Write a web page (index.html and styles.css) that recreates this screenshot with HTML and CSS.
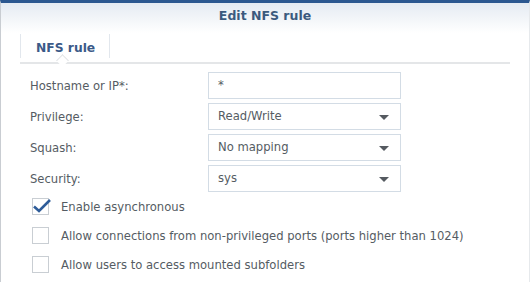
FILE: index.html
```html
<!DOCTYPE html>
<html lang="en">
<head>
  <meta charset="UTF-8">
  <title>Edit NFS rule</title>
  <link rel="stylesheet" href="styles.css">
</head>
<body>
  <div class="window">
    <div class="header">Edit NFS rule</div>

    <div class="tabs">
      <div class="tab active">NFS rule</div>
    </div>

    <div class="panel">
      <div class="row">
        <label class="label">Hostname or IP*:</label>
        <div class="field">*</div>
      </div>
      <div class="row">
        <label class="label">Privilege:</label>
        <div class="field select">Read/Write<span class="arrow"></span></div>
      </div>
      <div class="row">
        <label class="label">Squash:</label>
        <div class="field select">No mapping<span class="arrow"></span></div>
      </div>
      <div class="row">
        <label class="label">Security:</label>
        <div class="field select">sys<span class="arrow"></span></div>
      </div>

      <div class="checks">
        <div class="check">
          <span class="box">
            <svg width="18" height="14" viewBox="0 0 18 14"><path d="M1 7.5 L6 12 L17 1" fill="none" stroke="#2e5c99" stroke-width="2.6"/></svg>
          </span>
          Enable asynchronous
        </div>
        <div class="check">
          <span class="box"></span>
          Allow connections from non-privileged ports (ports higher than 1024)
        </div>
        <div class="check">
          <span class="box"></span>
          Allow users to access mounted subfolders
        </div>
      </div>
    </div>
  </div>
</body>
</html>
```

FILE: styles.css
```css
body {
  margin: 0;
  font-family: "DejaVu Sans", sans-serif;
  font-size: 11.6px;
  color: #555c63;
  background-color: #fff;
}
.window {
  height: 279px;
  border-top: 3px solid #2c5890;
  border-left: 1px solid #c9cdd2;
  border-right: 1px solid #e6e9ec;
  background-color: #fff;
  overflow: hidden;
}
.header {
  height: 30px;
  line-height: 26px;
  text-align: center;
  font-weight: bold;
  font-size: 12.5px;
  color: #3b5a7e;
  background: linear-gradient(#e5ebf2, #fff);
}
.tabs {
  display: flex;
  margin: 0 19px;
  height: 29px;
  border-bottom: 2px solid #e4e6e8;
  position: relative;
}
.tab {
  padding: 0 14px 0 15px;
  line-height: 28px;
  font-weight: bold;
  font-size: 12.3px;
  color: #3b5a88;
  border-left: 1px solid #e2e7ed;
  border-right: 1px solid #e2e7ed;
  height: 24px;
  margin-top: 1px;
  position: relative;
}
.tab.active::after {
  content: "";
  position: absolute;
  left: 37px;
  bottom: -7px;
  width: 8px;
  height: 8px;
  background: #fff;
  border-left: 1px solid #e0e2e4;
  border-top: 1px solid #e0e2e4;
  transform: rotate(45deg);
}
.panel {
  padding: 8px 0 0 29px;
}
.row {
  display: flex;
  align-items: center;
  height: 27px;
  margin-bottom: 4px;
}
.label {
  width: 178px;
}
.field {
  box-sizing: border-box;
  width: 193px;
  height: 27px;
  line-height: 25px;
  padding: 0 9px;
  border: 1px solid #d3dce5;
  position: relative;
}
.arrow {
  position: absolute;
  right: 11px;
  top: 11px;
  border-left: 5px solid transparent;
  border-right: 5px solid transparent;
  border-top: 5px solid #555a60;
}
.checks {
  display: flex;
  flex-direction: column;
  gap: 12px;
  padding-top: 2px;
}
.check {
  display: flex;
  align-items: center;
  height: 17px;
}
.box {
  box-sizing: border-box;
  width: 17px;
  height: 17px;
  border: 1px solid #c9ced3;
  margin: 0 12px 0 2px;
  position: relative;
}
.box svg {
  position: absolute;
  left: 0;
  top: 0;
}
```
